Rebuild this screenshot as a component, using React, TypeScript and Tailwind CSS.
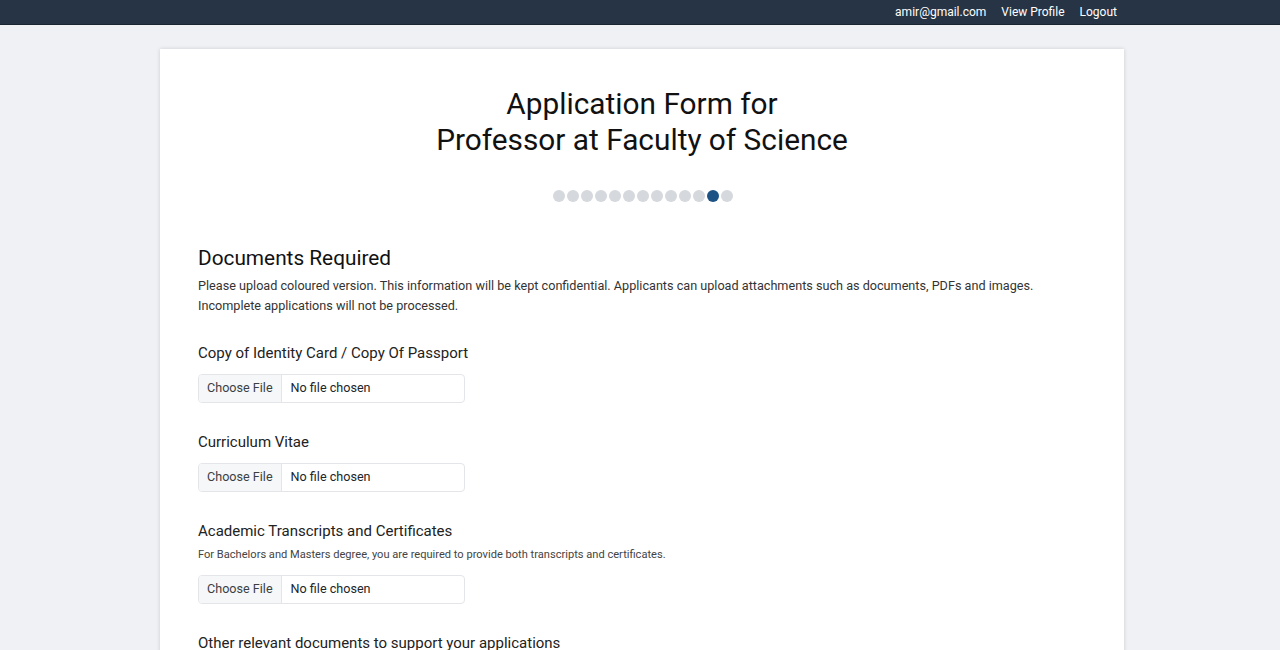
import React from "react";

const docs = [
  { label: "Copy of Identity Card / Copy Of Passport" },
  { label: "Curriculum Vitae" },
  {
    label: "Academic Transcripts and Certificates",
    hint: "For Bachelors and Masters degree, you are required to provide both transcripts and certificates.",
  },
  { label: "Other relevant documents to support your applications" },
];

const FileBox = () => (
  <label className="flex w-[267px] h-[29px] border border-[#e3e5e8] rounded-[4px] overflow-hidden text-[12.6px] text-[#212529] cursor-pointer">
    <input type="file" className="hidden" />
    <span className="flex items-center pl-[8px] pr-[8px] bg-[#f6f7f8] border-r border-[#e3e5e8] text-[#3a3f44]">
      Choose File
    </span>
    <span className="flex items-center px-[9px] bg-white">No file chosen</span>
  </label>
);

const App = () => {
  const steps = Array.from({ length: 13 }, (_, i) => i);

  return (
    <div className="min-h-screen bg-[#f0f1f5] font-['Roboto',sans-serif] text-[#212529]">
      <nav className="h-[25px] bg-[#263445] border-b border-[#1b2633] flex items-center justify-end pr-[163px] gap-[15px] text-[12px] text-white">
        <a href="#">amir@gmail.com</a>
        <a href="#">View Profile</a>
        <a href="#">Logout</a>
      </nav>

      <div className="w-[964px] ml-[160px] mt-[24px] bg-white shadow-[0_0_4px_rgba(0,0,0,0.15)] px-[38px] pt-[37px] pb-10">
        <h1 className="text-center text-[29.8px] leading-[36px] text-[#111]">
          Application Form for
          <br />
          Professor at Faculty of Science
        </h1>

        <div className="flex justify-center gap-[2px] mt-[32px] ml-[2px]">
          {steps.map((i) => (
            <span
              key={i}
              className={`w-[12px] h-[12px] rounded-full ${i === 11 ? "bg-[#1d5285]" : "bg-[#d5d8dc]"}`}
            />
          ))}
        </div>

        <h2 className="text-[20.8px] leading-[28px] mt-[42px] text-[#111]">Documents Required</h2>
        <p className="text-[12.65px] leading-[20px] mt-[4px] text-[#333]">
          Please upload coloured version. This information will be kept confidential. Applicants can upload attachments such as documents, PDFs and images.
          <br />
          Incomplete applications will not be processed.
        </p>

        <div className="mt-[27px] flex flex-col gap-[29px]">
          {docs.map((d, idx) => (
            <div key={idx}>
              <div className="text-[15px] leading-[20px] text-[#222]">{d.label}</div>
              {d.hint && (
                <div className="text-[11.1px] leading-[14px] mt-[7px] text-[#444]">{d.hint}</div>
              )}
              <div className={d.hint ? "mt-[13px]" : "mt-[11px]"}>
                <FileBox />
              </div>
            </div>
          ))}
        </div>
      </div>
    </div>
  );
};

export default App;
